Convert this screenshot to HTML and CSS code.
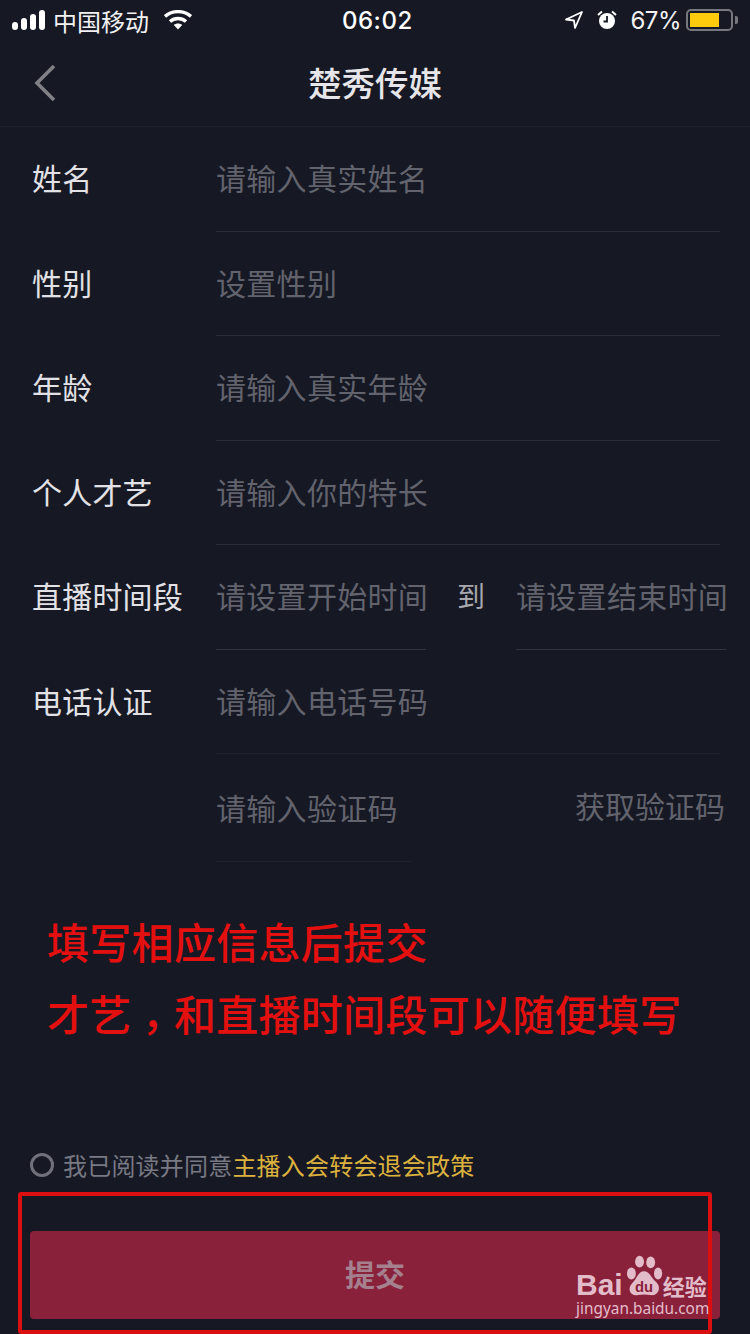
FILE: index.html
```html
<!DOCTYPE html>
<html lang="zh-CN">
<head>
    <meta charset="UTF-8">
    <meta name="viewport" content="width=device-width, initial-scale=1.0">
    <title>楚秀传媒</title>
    <link rel="stylesheet" href="styles.css">
</head>
<body>
    <div class="page">
        <!-- Status bar -->
        <div class="status-bar">
            <div class="status-left">
                <svg class="signal" width="34" height="20" viewBox="0 0 34 20"><rect x="0" y="12" width="6" height="8" rx="3" fill="#fff"/><rect x="9" y="8" width="6" height="12" rx="3" fill="#fff"/><rect x="18" y="4" width="6" height="16" rx="3" fill="#fff"/><rect x="27" y="0" width="6" height="20" rx="3" fill="#fff"/></svg>
                <span class="carrier">中国移动</span>
                <svg class="wifi" width="28" height="20" viewBox="0 0 28 20"><path d="M1 6.5 C8.5 0 19.5 0 27 6.5" fill="none" stroke="#fff" stroke-width="3.4"/><path d="M6 11.5 C10.5 7.5 17.5 7.5 22 11.5" fill="none" stroke="#fff" stroke-width="3.4"/><path d="M9.8 15 C12.2 13 15.8 13 18.2 15 L14 19.5 Z" fill="#fff"/></svg>
            </div>
            <div class="status-time">06:02</div>
            <div class="status-right">
                <svg width="20" height="20" viewBox="0 0 20 20"><path d="M18 2 L2 9.5 L10 10.5 L11 18 Z" fill="none" stroke="#fff" stroke-width="1.8" stroke-linejoin="round"/></svg>
                <svg class="alarm" width="20" height="20" viewBox="0 0 20 20"><circle cx="10" cy="11" r="8" fill="#fff"/><path d="M10 6 V11.5 H6.5" fill="none" stroke="#161824" stroke-width="1.8"/><path d="M1 5 L5 1.5 M19 5 L15 1.5" stroke="#fff" stroke-width="2"/></svg>
                <span class="battery-pct">67%</span>
                <div class="battery"><div class="battery-fill"></div></div>
                <div class="battery-tip"></div>
            </div>
        </div>

        <!-- Nav -->
        <div class="nav">
            <svg class="back" width="24" height="38" viewBox="0 0 24 38"><path d="M21 2 L4 19 L21 36" fill="none" stroke="#808086" stroke-width="3.6"/></svg>
            <h1>楚秀传媒</h1>
        </div>

        <!-- Form -->
        <div class="form">
            <div class="row"><div class="label">姓名</div><div class="field line-a">请输入真实姓名</div></div>
            <div class="row"><div class="label">性别</div><div class="field line-a">设置性别</div></div>
            <div class="row"><div class="label">年龄</div><div class="field line-a">请输入真实年龄</div></div>
            <div class="row"><div class="label">个人才艺</div><div class="field line-a">请输入你的特长</div></div>
            <div class="row">
                <div class="label">直播时间段</div>
                <div class="field time-field">请设置开始时间</div>
                <div class="to">到</div>
                <div class="field time-field">请设置结束时间</div>
            </div>
            <div class="row"><div class="label">电话认证</div><div class="field line-b">请输入电话号码</div></div>
            <div class="row code-row">
                <div class="label"></div>
                <div class="field code-field">请输入验证码</div>
                <div class="get-code">获取验证码</div>
            </div>
        </div>

        <!-- Red note added on the screenshot -->
        <div class="note">
            <p>填写相应信息后提交</p>
            <p>才艺<span class="comma" lang="zh-TW">，</span>和直播时间段可以随便填写</p>
        </div>

        <div class="agree">
            <span class="radio"></span>
            <span>我已阅读并同意<span class="policy">主播入会转会退会政策</span></span>
        </div>

        <button class="submit">提交</button>

        <div class="red-box"></div>

        <div class="watermark">
            <div class="wm-top">
                <span class="wm-bai">Bai</span>
                <svg class="wm-paw" width="38" height="43" viewBox="0 0 50 58">
                    <ellipse cx="8" cy="25" rx="6" ry="8" fill="#e3bcca"/>
                    <ellipse cx="19" cy="9" rx="6" ry="8" fill="#e3bcca"/>
                    <ellipse cx="34" cy="10" rx="6" ry="8" fill="#e3bcca"/>
                    <ellipse cx="44" cy="25" rx="5.5" ry="8" fill="#e3bcca"/>
                    <path d="M25 22 C33 22 35 32 42 37 C49 44 44 56 33 54 C28 53 22 53 17 54 C6 56 2 45 9 38 C15 33 17 22 25 22 Z" fill="#e3bcca"/>
                    <text x="25" y="50" text-anchor="middle" class="wm-du">du</text>
                </svg>
                <span class="wm-cn">经验</span>
            </div>
            <div class="wm-url">jingyan.baidu.com</div>
        </div>
    </div>
</body>
</html>
```

FILE: styles.css
```css
* {
    box-sizing: border-box;
}

html, body {
    margin: 0;
    padding: 0;
}

body {
    background-color: #161824;
    font-family: "Noto Sans CJK SC", "Noto Sans", sans-serif;
}

.page {
    position: relative;
    width: 750px;
    height: 1334px;
    overflow: hidden;
    background-color: #161824;
}

/* Status bar */
.status-bar {
    height: 40px;
    display: flex;
    align-items: center;
    justify-content: space-between;
    padding: 0 12px 0 12px;
    color: #fff;
    position: relative;
}

.status-left {
    display: flex;
    align-items: center;
}

.carrier {
    font-size: 24px;
    margin-left: 7px;
    color: #f2f2f4;
}

.wifi {
    margin-left: 15px;
}

.status-time {
    position: absolute;
    left: 342px;
    font-family: Inter, Roboto, sans-serif;
    font-size: 24px;
    font-weight: 500;
    letter-spacing: 0.5px;
}

.status-right {
    display: flex;
    align-items: center;
}

.alarm {
    margin-left: 13px;
}

.battery-pct {
    font-family: Inter, Roboto, sans-serif;
    font-size: 24px;
    letter-spacing: -0.5px;
    margin-left: 13px;
    color: #f2f2f4;
}

.battery {
    width: 47px;
    height: 22px;
    margin-left: 5px;
    border: 2px solid #77777e;
    border-radius: 5px;
    padding: 2px;
}

.battery-fill {
    width: 29px;
    height: 100%;
    background-color: #fdca0c;
}

.battery-tip {
    width: 3px;
    height: 8px;
    margin-left: 2px;
    background-color: #77777e;
    border-radius: 0 2px 2px 0;
}

/* Nav */
.nav {
    height: 87px;
    display: flex;
    align-items: center;
    justify-content: center;
    position: relative;
    border-bottom: 1px solid #1e202c;
}

.back {
    position: absolute;
    left: 33px;
    top: 24px;
}

.nav h1 {
    margin: 0;
    font-size: 33.5px;
    font-weight: 500;
    line-height: 84px;
    height: 87px;
    color: #e6e6ea;
}

/* Form */
.form {
    padding-left: 32px;
}

.row {
    display: flex;
    height: 104.5px;
}

.label {
    width: 184px;
    flex-shrink: 0;
    font-size: 30px;
    line-height: 101px;
    letter-spacing: 0.2px;
    color: #e2e2e6;
}

.field {
    font-size: 30px;
    line-height: 101px;
    letter-spacing: 0.3px;
    color: #62636c;
    white-space: nowrap;
}

.line-a {
    width: 504px;
    border-bottom: 1px solid #2a2c37;
}

.line-b {
    width: 504px;
    border-bottom: 1px solid #20222e;
}

.time-field {
    width: 210px;
    border-bottom: 1px solid #32333e;
}

.to {
    width: 90px;
    text-align: center;
    font-size: 28px;
    line-height: 101px;
    color: #a8a8ae;
}

.code-row {
    height: 108px;
}

.code-field {
    width: 196px;
    line-height: 107px;
    border-bottom: 1px solid #20222e;
}

.get-code {
    margin-left: 163px;
    font-size: 30px;
    line-height: 102px;
    color: #62636c;
    white-space: nowrap;
}

/* Red note */
.note {
    margin-top: 43px;
    padding-left: 47px;
    color: #e3100f;
    font-size: 42px;
    font-weight: 500;
    letter-spacing: 0.3px;
}

.note p {
    margin: 0;
    height: 72px;
    line-height: 72px;
}

.comma {
    font-family: "Noto Sans CJK TC", sans-serif;
    vertical-align: -12px;
}

/* Agreement */
.agree {
    display: flex;
    align-items: center;
    margin-top: 99px;
    padding-left: 30px;
    font-size: 24px;
    line-height: 34px;
    letter-spacing: 0.2px;
    color: #787983;
}

.radio {
    width: 24px;
    height: 24px;
    margin-right: 9px;
    border: 3px solid #6f707a;
    border-radius: 50%;
}

.policy {
    color: #dcb23e;
}

/* Submit */
.submit {
    display: block;
    width: 690px;
    height: 88px;
    margin: 49px 0 0 30px;
    padding: 0 0 4px;
    border: none;
    border-radius: 4px;
    background-color: #8a213b;
    color: #a5808e;
    font-family: inherit;
    font-size: 30px;
    font-weight: 700;
}

/* Overlays on the screenshot */
.red-box {
    position: absolute;
    left: 18px;
    top: 1192px;
    width: 694px;
    height: 142px;
    border: 4px solid #dc0f10;
    border-radius: 3px;
}

.watermark {
    position: absolute;
    left: 576px;
    top: 1255px;
    color: #e3bcca;
}

.wm-top {
    display: flex;
    align-items: flex-end;
    height: 43px;
}

.wm-bai {
    font-family: "Liberation Sans", sans-serif;
    font-size: 30px;
    font-weight: 700;
    line-height: 26px;
    margin-right: 2px;
}

.wm-du {
    font-family: "Liberation Sans", sans-serif;
    font-size: 20px;
    font-weight: 700;
    fill: #8a213b;
}

.wm-cn {
    font-size: 22px;
    font-weight: 700;
    line-height: 26px;
}

.wm-url {
    font-family: "Noto Sans", sans-serif;
    font-size: 15.4px;
    line-height: 20px;
    margin-top: 1px;
    white-space: nowrap;
}
```
